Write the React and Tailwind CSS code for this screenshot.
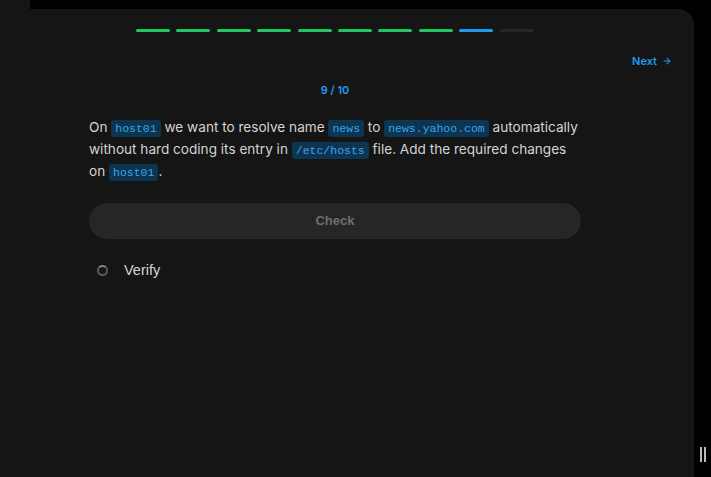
import React from 'react';

const Code = ({ children }) => (
  <code className="rounded-[3px] bg-[#0d3450] px-[4px] py-[2px] text-[11.5px] leading-[14px] text-[#3aa4ec] [font-family:'Liberation_Mono',monospace]">
    {children}
  </code>
);

const steps = ['done', 'done', 'done', 'done', 'done', 'done', 'done', 'done', 'current', 'todo'];

const App = () => {
  return (
    <div className="relative flex h-[477px] w-[711px] flex-col overflow-hidden bg-black [font-family:Inter,'Noto_Sans',sans-serif]">
      {/* bande du haut */}
      <div className="h-[9px] w-[30px] bg-[#151515]" />

      {/* panneau principal */}
      <div className="flex w-[694px] flex-1 flex-col rounded-tr-[16px] bg-[#151515]">
        {/* progression */}
        <div className="mt-[20px] flex gap-[6.4px] pl-[136px]">
          {steps.map((s, i) => (
            <div
              key={i}
              className={
                'h-[3px] w-[34px] rounded-full ' +
                (s === 'done' ? 'bg-[#22c55e]' : s === 'current' ? 'bg-[#1d9bf0]' : 'bg-[#262626]')
              }
            />
          ))}
        </div>

        {/* suivant */}
        <div className="mt-[21px] flex justify-end pr-[22px]">
          <button className="flex items-center gap-[5px] text-[11px] font-semibold text-[#1d9bf0]">
            Next
            <svg width="10" height="10" viewBox="0 0 24 24" fill="none" stroke="currentColor" strokeWidth="2.5" strokeLinecap="round" strokeLinejoin="round">
              <path d="M5 12h14" />
              <path d="M12 5l7 7-7 7" />
            </svg>
          </button>
        </div>

        <div className="ml-[89px] flex w-[492px] flex-col">
          <div className="mt-[12px] text-center text-[11px] font-semibold text-[#1d9bf0]">9 / 10</div>

          <p className="mt-[18px] text-[13.6px] leading-[22px] text-[#d4d4d4]">
            On <Code>host01</Code> we want to resolve name <Code>news</Code> to <Code>news.yahoo.com</Code> automatically
            without hard coding its entry in <Code>/etc/hosts</Code> file. Add the required changes on <Code>host01</Code>.
          </p>

          <button className="mt-[21px] h-[36px] w-full rounded-full bg-[#262626] text-[13px] font-semibold text-[#6f6f6f] [font-family:'Liberation_Sans',Arial,sans-serif]">
            Check
          </button>

          <div className="mt-[21px] flex items-center gap-[16px] pl-[8px]">
            <div className="h-[11px] w-[11px] rounded-full border-[2px] border-[#5a5a5a] border-t-[#8a8a8a]" />
            <span className="text-[14.5px] text-[#d4d4d4] [font-family:'Liberation_Sans',Arial,sans-serif]">Verify</span>
          </div>
        </div>
      </div>

      {/* poignée */}
      <div className="absolute bottom-[15px] right-[5px] flex gap-[2px]">
        <div className="h-[15px] w-[2px] bg-[#b8b8c0]" />
        <div className="h-[15px] w-[2px] bg-[#b8b8c0]" />
      </div>
    </div>
  );
};

export default App;
